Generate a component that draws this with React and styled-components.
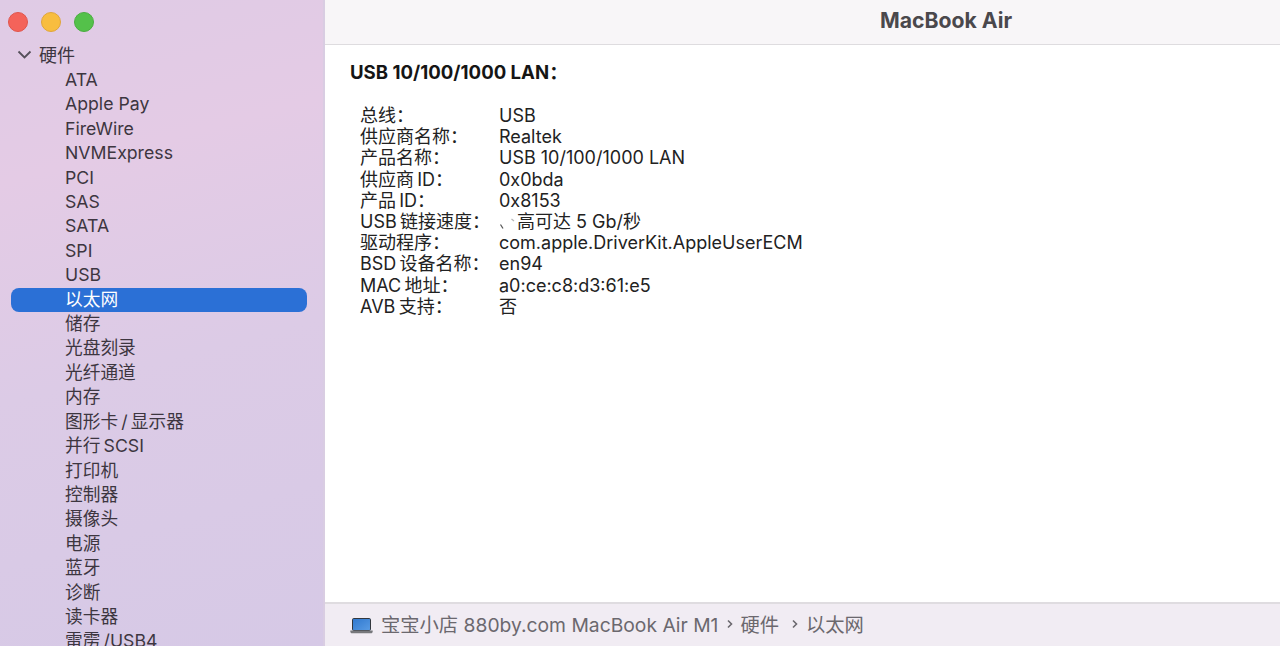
import React from 'react'
import styled, { createGlobalStyle } from 'styled-components'

const FONT = `Inter, "Noto Sans CJK SC", sans-serif`

const GlobalStyle = createGlobalStyle`
  html, body {
    margin: 0;
    padding: 0;
    height: 100%;
    overflow: hidden;
    background: white;
  }
  #root {
    height: 100%;
  }
`

const Window = styled.div`
  display: flex;
  width: 1280px;
  height: 646px;
  overflow: hidden;
  font-family: ${FONT};
`

const Sidebar = styled.aside`
  box-sizing: border-box;
  width: 325px;
  height: 646px;
  flex-shrink: 0;
  overflow: hidden;
  padding: 12px 16px 0 11px;
  background: linear-gradient(165deg, #dfcbe5 0%, #e4cbe5 25%, #dccbe6 55%, #d6c9e6 100%);
  border-right: 2px solid #d9cde2;
`

const Traffic = styled.div`
  display: flex;
  gap: 13px;
  margin: 0 0 10px -3px;
`

const Light = styled.span`
  box-sizing: border-box;
  width: 20px;
  height: 20px;
  border-radius: 50%;
  background: ${(props) => props.color};
  border: 1px solid ${(props) => props.edge};
`

const GroupRow = styled.div`
  display: flex;
  align-items: center;
  gap: 7px;
  height: 24px;
  padding-left: 6px;
  font-size: 18px;
  color: #3d3640;
`

const List = styled.ul`
  list-style: none;
  margin: 2px 0 0;
  padding: 0;
`

const Item = styled.li`
  box-sizing: border-box;
  height: 24.42px;
  line-height: 24px;
  padding-left: 54px;
  font-size: 17.7px;
  white-space: nowrap;
  color: ${(props) => (props.$active ? '#ffffff' : '#3d3640')};
  background: ${(props) => (props.$active ? '#2b70d6' : 'transparent')};
  border-radius: 8px;
`

const Main = styled.main`
  flex: 1;
  display: flex;
  flex-direction: column;
  min-width: 0;
`

const TitleBar = styled.header`
  box-sizing: border-box;
  height: 45px;
  display: flex;
  align-items: center;
  justify-content: center;
  background: #f8f6f8;
  border-bottom: 1px solid #dedcdf;
  font-size: 21.2px;
  font-weight: 700;
  color: #4a484c;
  padding: 0 0 5px 287px;
`

const Content = styled.section`
  flex: 1;
  background: white;
  padding: 15px 25px 0;
  color: #222222;
`

const Heading = styled.h2`
  margin: 0 0 21px;
  font-size: 18.6px;
  line-height: 24px;
  font-weight: 700;
  color: #151515;
`

const Details = styled.dl`
  display: grid;
  grid-template-columns: 139px 1fr;
  grid-auto-rows: 21.2px;
  margin: 0;
  padding-left: 10px;
  font-size: 18px;
  line-height: 21px;
`

const Label = styled.dt`
  margin: 0;
  white-space: nowrap;
`

const Value = styled.dd`
  margin: 0;
  white-space: nowrap;
`

const Smudge = styled.svg`
  margin-right: 1px;
  vertical-align: -2px;
`

const PathBar = styled.footer`
  box-sizing: border-box;
  height: 44px;
  display: flex;
  align-items: center;
  padding: 0 0 2px 25px;
  background: #f1ecf3;
  border-top: 2px solid #dfdce0;
  font-size: 19.3px;
  color: #6b686e;
  white-space: nowrap;
`

const Crumb = styled.span``

const Chevron = styled.svg`
  margin: 0 ${(props) => props.$right}px 0 ${(props) => props.$left}px;
  flex-shrink: 0;
`

const Laptop = styled.svg`
  margin: 3px 8px 0 0;
  flex-shrink: 0;
`

const items = [
  'ATA', 'Apple Pay', 'FireWire', 'NVMExpress', 'PCI', 'SAS', 'SATA', 'SPI', 'USB',
  '以太网', '储存', '光盘刻录', '光纤通道', '内存', '图形卡\u2009/\u2009显示器', '并行\u2009SCSI', '打印机',
  '控制器', '摄像头', '电源', '蓝牙', '诊断', '读卡器', '雷雳\u2009/USB4',
]

const SmudgeMark = () => (
  <Smudge width="17" height="12" viewBox="0 0 17 12">
    <path d="M1.5 6.5 4 10.5" fill="none" stroke="#555555" strokeWidth="1.2" />
    <path d="M12.5 1 15 3" fill="none" stroke="#b5b5b5" strokeWidth="1.2" />
  </Smudge>
)

const rows = [
  ['总线：', 'USB'],
  ['供应商名称：', 'Realtek'],
  ['产品名称：', 'USB 10/100/1000 LAN'],
  ['供应商\u2009ID：', '0x0bda'],
  ['产品\u2009ID：', '0x8153'],
  ['USB\u2009链接速度：', <><SmudgeMark />高可达 5 Gb/秒</>],
  ['驱动程序：', 'com.apple.DriverKit.AppleUserECM'],
  ['BSD\u2009设备名称：', 'en94'],
  ['MAC\u2009地址：', 'a0:ce:c8:d3:61:e5'],
  ['AVB\u2009支持：', '否'],
]

const LaptopIcon = () => (
  <Laptop width="23" height="16" viewBox="0 0 23 16">
    <defs>
      <linearGradient id="screen" x1="0" y1="0" x2="1" y2="1">
        <stop offset="0" stopColor="#2f78cf" />
        <stop offset="1" stopColor="#5a9ce4" />
      </linearGradient>
    </defs>
    <rect x="2.5" y="0.5" width="18" height="12" rx="1.2" fill="url(#screen)" stroke="#33373e" />
    <path d="M0.3 12.6h22.4v.9c0 1.1-.7 1.8-1.8 1.8H2.1c-1.1 0-1.8-.7-1.8-1.8z" fill="#77787c" />
  </Laptop>
)

const SmallChevron = ({ left, right }) => (
  <Chevron $left={left} $right={right} width="6" height="10" viewBox="0 0 6 10">
    <path d="M1 1.5 4.5 5 1 8.5" fill="none" stroke="#6b686e" strokeWidth="1.6" />
  </Chevron>
)

const App = () => {
  return (
    <Window>
      <GlobalStyle />
      <Sidebar>
        <Traffic>
          <Light color="#f4635a" edge="#e0554c" />
          <Light color="#f8bd3f" edge="#e0a63a" />
          <Light color="#54c14a" edge="#4aad40" />
        </Traffic>
        <GroupRow>
          <svg width="15" height="9" viewBox="0 0 15 9">
            <path d="M1.5 1.5 7.5 7.5 13.5 1.5" fill="none" stroke="#55505a" strokeWidth="1.8" />
          </svg>
          硬件
        </GroupRow>
        <List>
          {items.map((item) => (
            <Item key={item} $active={item === '以太网'}>{item}</Item>
          ))}
        </List>
      </Sidebar>
      <Main>
        <TitleBar>MacBook Air</TitleBar>
        <Content>
          <Heading>USB 10/100/1000 LAN：</Heading>
          <Details>
            {rows.map(([label, value]) => (
              <React.Fragment key={label}>
                <Label>{label}</Label>
                <Value>{value}</Value>
              </React.Fragment>
            ))}
          </Details>
        </Content>
        <PathBar>
          <LaptopIcon />
          <Crumb>宝宝小店 880by.com MacBook Air M1</Crumb>
          <SmallChevron left={9} right={7} />
          <Crumb>硬件</Crumb>
          <SmallChevron left={13} right={8} />
          <Crumb>以太网</Crumb>
        </PathBar>
      </Main>
    </Window>
  )
}

export default App
